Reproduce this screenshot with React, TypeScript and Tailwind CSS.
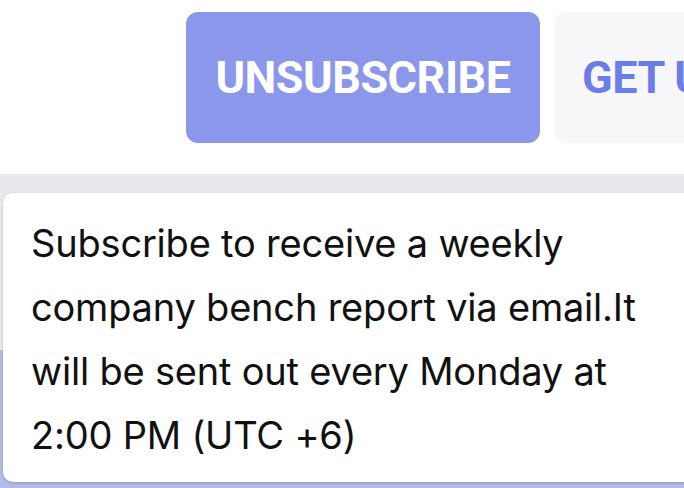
import React from "react";

export default function App() {
  return (
    <div className="relative w-[684px] h-[488px] overflow-hidden bg-white" style={{ fontFamily: "Inter, Roboto, 'Liberation Sans', sans-serif" }}>
      {/* top action bar */}
      <div className="h-[174px] flex items-start pt-[12px] pl-[186px] gap-[14px]">
        <button className="shrink-0 w-[354px] h-[131px] rounded-[12px] bg-[#8a97ea] text-white font-bold text-[45px] tracking-[-0.5px] whitespace-nowrap flex items-center justify-center" style={{ fontFamily: "Roboto, 'Liberation Sans', sans-serif" }}>
          UNSUBSCRIBE
        </button>
        <button className="shrink-0 w-[300px] h-[131px] rounded-[12px] bg-[#f7f7f9] text-[#6b7de6] font-bold text-[45px] tracking-[-0.5px] whitespace-nowrap flex items-center pl-[28px]" style={{ fontFamily: "Roboto, 'Liberation Sans', sans-serif" }}>
          GET UPDATES
        </button>
      </div>
      {/* table area underneath */}
      <div className="flex flex-col">
        <div className="h-[176px] bg-[#e9e9ed]" />
        <div className="h-[138px] bg-[#b3bce6]" />
      </div>
      {/* tooltip */}
      <div className="absolute left-[3px] top-[193px] w-[700px] h-[289px] bg-white rounded-[10px] shadow-[0_1px_3px_rgba(0,0,0,0.2)] pl-[28px] pt-[18px]">
        <p className="text-[38px] leading-[64px] tracking-[-0.2px] text-[#111] w-[660px] whitespace-nowrap">
          Subscribe to receive a weekly
          <br />
          company bench report via email.It
          <br />
          will be sent out every Monday at
          <br />
          2:00 PM (UTC +6)
        </p>
      </div>
    </div>
  );
}
